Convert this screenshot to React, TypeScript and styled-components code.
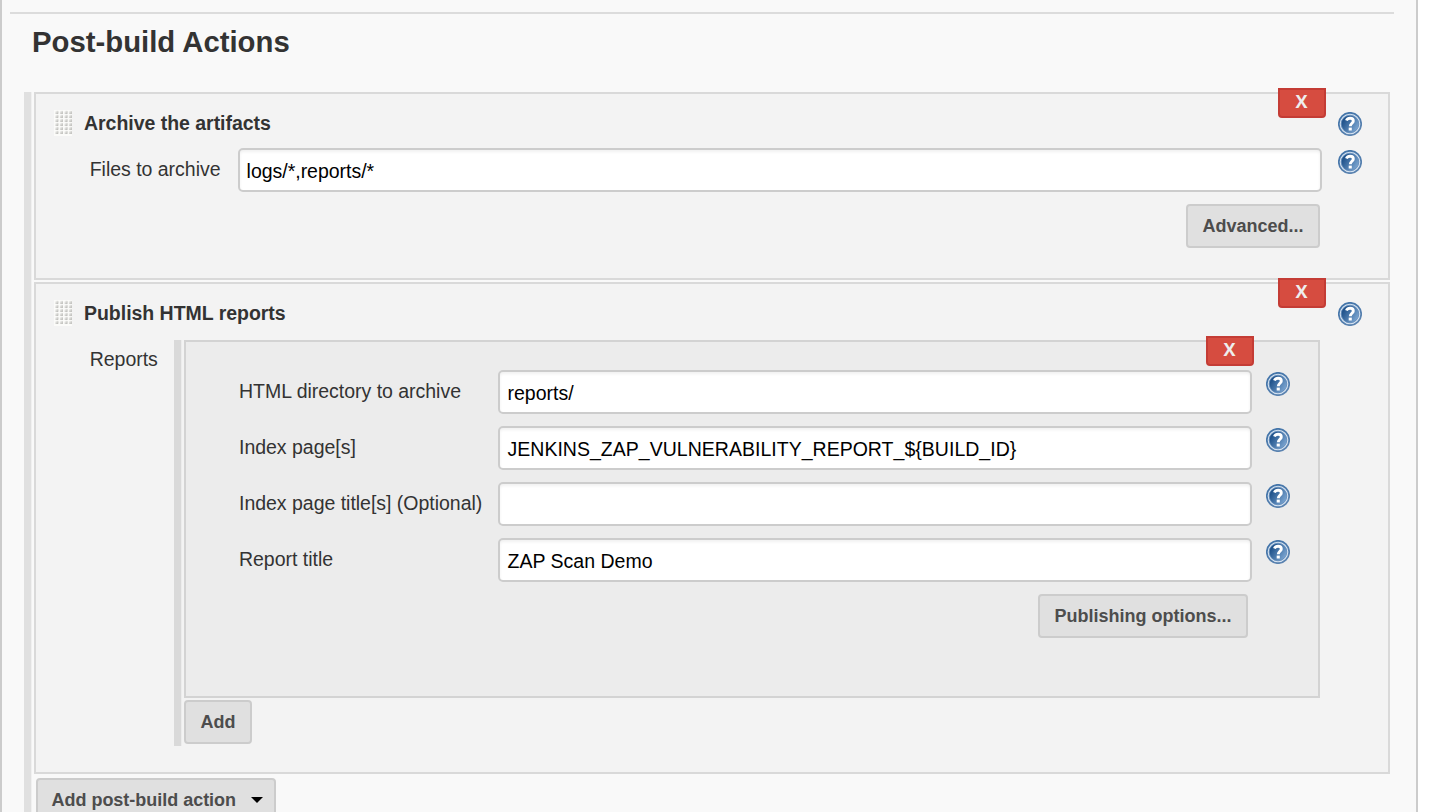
import React from "react";
import styled, { createGlobalStyle, css } from "styled-components";

const GlobalStyle = createGlobalStyle`
  *, *::before, *::after { box-sizing: border-box; }
  body {
    margin: 0;
    background: #fff;
    color: #333;
    font-family: "Liberation Sans", Helvetica, Arial, sans-serif;
    font-size: 19.5px;
    line-height: 24px;
    overflow: hidden;
  }
`;

const Page = styled.main`
  width: 1418px;
  height: 812px;
  overflow: hidden;
  padding: 12px 22px 0 8px;
  background: #f9f9f9;
  border: solid #ccc;
  border-width: 0 2px;
`;

const Divider = styled.hr`
  height: 2px;
  margin: 0;
  border: 0;
  background: #dcdcdc;
`;

const Heading = styled.h1`
  margin: 10px 0 0 22px;
  height: 68px;
  font-size: 29.3px;
  line-height: 36px;
  letter-spacing: 0;
`;

const RepeatedList = styled.div<{ $nested?: boolean }>`
  display: flex;
  flex-direction: column;
  align-items: stretch;
  gap: 2px;
  border-left: 7px solid ${(p) => (p.$nested ? "#d9d9d9" : "#e0e0e0")};
  box-shadow: inset 1px 0 ${(p) => (p.$nested ? "#ececec" : "#f0f0f0")};
  ${(p) =>
    p.$nested
      ? css`
          width: 1146px;
          height: 406px;
          margin-top: 2px;
          padding-left: 3px;
        `
      : css`
          width: 1366px;
          height: 760px;
          margin-left: 14px;
          padding-left: 3px;
        `}
`;

const Chunk = styled.section<{ $height: number; $nested?: boolean }>`
  position: relative;
  flex: none;
  height: ${(p) => p.$height}px;
  border: 2px solid ${(p) => (p.$nested ? "#d3d3d3" : "#d9d9d9")};
  background: ${(p) => (p.$nested ? "#ececec" : "#f3f3f3")};
  padding: ${(p) => (p.$nested ? "28px 28px 0 53px" : "16px 26px 0 18px")};
`;

const DeleteButton = styled.button<{ $right: number }>`
  position: absolute;
  top: -6px;
  right: ${(p) => p.$right}px;
  width: 48px;
  height: 30px;
  padding: 0 1px 4px 0;
  border: 2px solid #c43c35;
  border-radius: 0 0 4px 4px;
  background: #d64c40;
  color: #eee;
  font: bold 18px/22px "Open Sans", sans-serif;
`;

const ChunkHeader = styled.header`
  display: flex;
  align-items: flex-start;
  height: 38px;
`;

const ChunkTitle = styled.h2`
  flex: 1;
  margin: 1px 0 0 12px;
  font-size: 19.5px;
  line-height: 24px;
  letter-spacing: -0.03px;
`;

const Row = styled.div<{ $nested?: boolean }>`
  display: flex;
  align-items: flex-start;
  height: 56px;
  padding-left: ${(p) => (p.$nested ? 0 : 35.7)}px;
`;

const Label = styled.label<{ $width: number }>`
  flex: none;
  width: ${(p) => p.$width}px;
  padding-top: 9px;
  letter-spacing: -0.02px;
  white-space: nowrap;
`;

const TextInput = styled.input<{ $nested?: boolean }>`
  flex: 1;
  min-width: 0;
  height: 44px;
  padding: 2px 7px 0 ${(p) => (p.$nested ? 7.5 : 6.6)}px;
  border: 2px solid #ccc;
  border-radius: 5px;
  background: #fff;
  box-shadow: inset 0 2px 3px rgba(0, 0, 0, 0.06);
  color: #000;
  font: 19.5px/24px "Liberation Sans", Helvetica, Arial, sans-serif;
  letter-spacing: ${(p) => (p.$nested ? 0.02 : -0.02)}px;
  outline: none;
`;

const HelpLink = styled.span<{ $left?: number }>`
  flex: none;
  display: block;
  width: 24px;
  height: 24px;
  margin: 2px 0 0 ${(p) => p.$left ?? 0}px;
`;

const Button = styled.button<{ $width: number }>`
  flex: none;
  display: inline-flex;
  align-items: center;
  justify-content: center;
  gap: 15px;
  width: ${(p) => p.$width}px;
  height: 44px;
  padding: 0;
  border: 2px solid #ccc;
  border-radius: 4px;
  background: #e0e0e0;
  color: #4d4d4d;
  font: bold 18px/24px "Liberation Sans", Helvetica, Arial, sans-serif;
  white-space: nowrap;
`;

const MenuButton = styled(Button)`
  justify-content: flex-start;
  padding-left: 13.5px;
  letter-spacing: -0.02px;
`;

const ButtonRow = styled.div<{ $right: number }>`
  display: flex;
  justify-content: flex-end;
  padding-right: ${(p) => p.$right}px;
`;

const AddActionRow = styled.div`
  padding: 2px 0 0 2px;
`;

const Caret = styled.span`
  width: 0;
  height: 0;
  border: solid transparent;
  border-width: 6px 6px 0;
  border-top-color: #000;
`;

const Help = ({ left }: { left?: number }) => (
  <HelpLink $left={left}>
    <svg width="24" height="24" viewBox="0 0 24 24" role="img" aria-label="Help">
      <defs>
        <linearGradient id="helpFill" x1="0" y1="0.2" x2="1" y2="0.8">
          <stop offset="0.1" stopColor="#1c4f88" />
          <stop offset="1" stopColor="#82abd6" />
        </linearGradient>
        <linearGradient id="helpRim" x1="0" y1="0" x2="0.6" y2="1">
          <stop offset="0" stopColor="#3f72a8" />
          <stop offset="1" stopColor="#5b83b0" />
        </linearGradient>
      </defs>
      <circle cx="12" cy="12" r="11.2" fill="#d5e2f0" stroke="url(#helpRim)" strokeWidth="1.7" />
      <circle cx="12" cy="12" r="8.8" fill="url(#helpFill)" stroke="#5d88b8" strokeWidth="0.8" />
      <path
        d="M8.4 8.5C9.2 6.8 10.6 6.2 12.1 6.2C14.2 6.2 15.3 7.4 15.3 8.9C15.3 11.2 12.3 11.3 12.3 14.2"
        fill="none"
        stroke="#fff"
        strokeWidth="2.9"
      />
      <rect x="10.7" y="15.6" width="3.1" height="2.9" fill="#fff" />
    </svg>
  </HelpLink>
);

const DragHandle = () => (
  <svg width="18" height="26" viewBox="0 0 18 26" aria-hidden="true">
    <defs>
      <linearGradient id="gripDot" x1="0" y1="0" x2="1" y2="1">
        <stop offset="0.1" stopColor="#f6f6f4" />
        <stop offset="1" stopColor="#b2b2ae" />
      </linearGradient>
    </defs>
    <rect width="18" height="26" fill="#fbfbf9" />
    {[0.8, 4.8, 8.8, 12.8, 16.8, 20.8].map((y) =>
      [1.2, 5.8, 10.4, 14.8].map((x) => (
        <rect key={`${x}-${y}`} x={x} y={y} width="3.2" height="3.1" rx="0.6" fill="url(#gripDot)" />
      ))
    )}
  </svg>
);

const reportFields = [
  { id: "dir", label: "HTML directory to archive", value: "reports/" },
  { id: "index", label: "Index page[s]", value: "JENKINS_ZAP_VULNERABILITY_REPORT_${BUILD_ID}" },
  { id: "indexTitle", label: "Index page title[s] (Optional)", value: "" },
  { id: "title", label: "Report title", value: "ZAP Scan Demo" },
];

export default function App() {
  return (
    <>
      <GlobalStyle />
      <Page>
        <Divider />
        <Heading>Post-build Actions</Heading>
        <RepeatedList>
          <Chunk $height={188}>
            <DeleteButton $right={62}>X</DeleteButton>
            <ChunkHeader>
              <DragHandle />
              <ChunkTitle>Archive the artifacts</ChunkTitle>
              <Help />
            </ChunkHeader>
            <Row>
              <Label $width={148.3} htmlFor="files">Files to archive</Label>
              <TextInput id="files" defaultValue="logs/*,reports/*" />
              <Help left={16} />
            </Row>
            <ButtonRow $right={42}>
              <Button $width={134}>Advanced...</Button>
            </ButtonRow>
          </Chunk>
          <Chunk $height={492}>
            <DeleteButton $right={62}>X</DeleteButton>
            <ChunkHeader>
              <DragHandle />
              <ChunkTitle>Publish HTML reports</ChunkTitle>
              <Help />
            </ChunkHeader>
            <Row>
              <Label $width={84.3}>Reports</Label>
              <RepeatedList $nested>
                <Chunk $height={358} $nested>
                  <DeleteButton $right={64}>X</DeleteButton>
                  {reportFields.map((f) => (
                    <Row key={f.id} $nested>
                      <Label $width={259} htmlFor={f.id}>{f.label}</Label>
                      <TextInput id={f.id} defaultValue={f.value} $nested />
                      <Help left={14} />
                    </Row>
                  ))}
                  <ButtonRow $right={42}>
                    <Button $width={210}>Publishing options...</Button>
                  </ButtonRow>
                </Chunk>
                <div>
                  <Button $width={68}>Add</Button>
                </div>
              </RepeatedList>
            </Row>
          </Chunk>
          <AddActionRow>
            <MenuButton $width={240}>
              Add post-build action
              <Caret />
            </MenuButton>
          </AddActionRow>
        </RepeatedList>
      </Page>
    </>
  );
}
